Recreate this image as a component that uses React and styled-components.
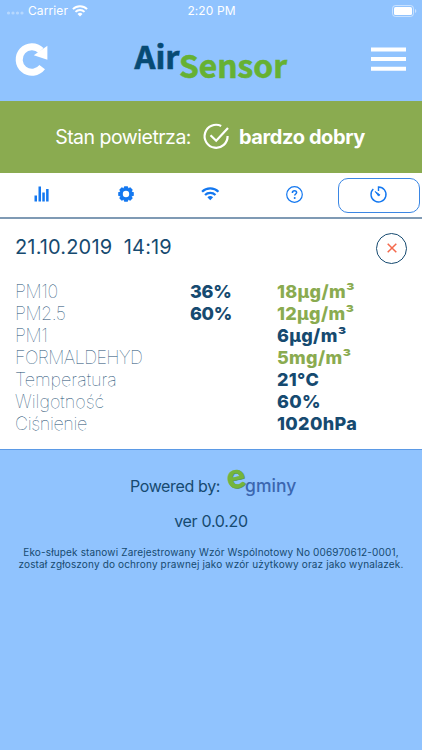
import React from "react"
import styled, { createGlobalStyle } from "styled-components"

const GlobalStyle = createGlobalStyle`
  :root {
    --sky: #90c3fe;
    --navy: #164a70;
    --olive: #8aab50;
    --blue: #1478f0;
  }

  * {
    box-sizing: border-box;
  }

  body {
    margin: 0;
    background: var(--sky);
    font-family: Inter, "Liberation Sans", sans-serif;
    color: var(--navy);
  }

  svg {
    display: block;
    flex: none;
    overflow: visible;
  }
`

const Screen = styled.div`
  display: flex;
  flex-direction: column;
  width: 422px;
  height: 750px;
  overflow: hidden;
  background: var(--sky);
`

const StatusBar = styled.div`
  display: grid;
  grid-template-columns: 1fr auto 1fr;
  align-items: center;
  height: 21px;
  padding: 0 5px 0 6px;
  color: #fff;
  font-size: 12px;
  letter-spacing: 0.1px;
`

const Carrier = styled.div`
  display: flex;
  align-items: center;
  gap: 4px;
`

const Battery = styled.div`
  justify-self: end;
`

const Header = styled.header`
  display: flex;
  align-items: center;
  justify-content: space-between;
  height: 80px;
  padding: 0 16px 4px 15px;
`

const IconButton = styled.button`
  display: flex;
  padding: 0;
  border: 0;
  background: none;
`

const Banner = styled.div`
  display: flex;
  align-items: center;
  justify-content: center;
  height: 72px;
  padding-right: 2px;
  background: var(--olive);
  color: #fff;
  font-size: 20px;

  svg {
    margin: 0 9px 0 12px;
  }
`

const BannerLabel = styled.span`
  font-size: 19.5px;
  letter-spacing: -0.5px;
`

const BannerValue = styled.strong`
  font-weight: 700;
  letter-spacing: -0.4px;
`

const Tabs = styled.nav`
  display: grid;
  grid-template-columns: repeat(5, 1fr);
  height: 46px;
  padding-top: 5px;
  background: #fff;
  border-bottom: 2px solid #7f9ab4;
`

const Tab = styled.button`
  display: flex;
  align-items: center;
  justify-content: center;
  height: 35px;
  margin: 0 2px 0 0;
  padding: 0 0 3px;
  border: 1px solid ${(p) => (p.$active ? "#3a86e4" : "transparent")};
  border-radius: 10px;
  background: none;
`

const Panel = styled.section`
  height: 231px;
  padding: 14px 15px 0 16px;
  background: #fff;
  border-bottom: 1px solid #5b9ae6;
`

const PanelTop = styled.div`
  display: flex;
  justify-content: space-between;
  height: 48px;
`

const DateText = styled.div`
  margin-left: -1px;
  font-size: 20px;
  line-height: 28px;
  letter-spacing: 0.15px;
  white-space: pre;
`

const CloseButton = styled.button`
  display: flex;
  align-items: center;
  justify-content: center;
  width: 31px;
  height: 31px;
  padding: 0 0 2px;
  border: 1px solid var(--navy);
  border-radius: 50%;
  background: none;
`

const Reading = styled.div`
  display: grid;
  grid-template-columns: 174px 87px 1fr;
  height: 22px;
  line-height: 22px;
  font-size: 18px;
`

const Name = styled.span`
  margin-left: -1px;
  font-weight: 100;
  letter-spacing: ${(p) => p.$spacing || 0}px;
`

const Value = styled.span`
  font-weight: 800;
  letter-spacing: ${(p) => p.$spacing || 0}px;
  color: ${(p) => (p.$good ? "var(--olive)" : "var(--navy)")};
`

const Footer = styled.footer`
  display: flex;
  flex-direction: column;
  align-items: center;
  padding-top: 19px;
`

const Powered = styled.div`
  display: flex;
  align-items: center;
  gap: 7px;
  height: 34px;
  padding-left: 5px;
  font-size: 16px;
  letter-spacing: -0.35px;
`

const Version = styled.div`
  margin-top: 8px;
  font-size: 16px;
  line-height: 20px;
  letter-spacing: -0.3px;
`

const Legal = styled.p`
  margin: 15px 0 0;
  font-size: 10px;
  line-height: 12px;
  letter-spacing: 0.15px;
  text-align: center;
  white-space: nowrap;
`

const readings = [
  { name: "PM10", spacing: -0.4, percent: "36%", value: "18µg/m³", good: true },
  { name: "PM2.5", spacing: -0.5, percent: "60%", value: "12µg/m³", good: true },
  { name: "PM1", spacing: -0.4, value: "6µg/m³" },
  { name: "FORMALDEHYD", spacing: -0.6, value: "5mg/m³", good: true },
  { name: "Temperatura", spacing: 0, value: "21°C" },
  { name: "Wilgotność", spacing: 0, value: "60%" },
  { name: "Ciśnienie", spacing: -0.35, value: "1020hPa" },
]

function WifiIcon({ width, color }) {
  return (
    <svg width={width} height={width * 0.72} viewBox="0 0 18 13" fill="none" stroke={color} strokeWidth="2.2">
      <path d="M1 4.7a11.4 11.4 0 0 1 16 0" />
      <path d="M3.9 7.8a7.3 7.3 0 0 1 10.2 0" />
      <path d="M9 13 6.2 10.1a4 4 0 0 1 5.6 0Z" fill={color} stroke="none" />
    </svg>
  )
}

function ReloadIcon() {
  return (
    <svg width="33" height="33" viewBox="0 0 33 33">
      <path d="M27.2 24.2A12.8 12.8 0 1 1 26 7.4" fill="none" stroke="#fff" strokeWidth="7" />
      <path d="M32.4 2.8v14L18.8 12.2Z" fill="#fff" />
    </svg>
  )
}

function AirSensorLogo() {
  return (
    <svg
      width="156"
      height="60"
      viewBox="0 0 156 60"
      fontFamily="'Noto Sans CJK SC', 'Noto Sans', sans-serif"
      fontWeight="700"
      fontSize="31.5"
      strokeWidth="0.6"
    >
      <text x="2.5" y="39.8" fill="#064a74" stroke="#064a74" textLength="45" lengthAdjust="spacingAndGlyphs">
        Air
      </text>
      <text x="47" y="48.8" fill="#66b132" stroke="#66b132" textLength="108" lengthAdjust="spacingAndGlyphs">
        Sensor
      </text>
    </svg>
  )
}

function MenuIcon() {
  return (
    <svg width="35" height="24" viewBox="0 0 35 24" fill="#fff">
      <path d="M0 .5h35v4H0zM0 10h35v4H0zM0 19.7h35v4H0z" />
    </svg>
  )
}

function CheckIcon() {
  return (
    <svg width="27" height="28" viewBox="0 0 27 28" fill="none" stroke="#fff" strokeWidth="2.2">
      <path d="M18.2 3A11.5 11.5 0 1 0 24.6 13" />
      <path d="m7.5 12.3 5.7 5.5L25 5" />
    </svg>
  )
}

function BarsIcon() {
  return (
    <svg width="15" height="16" viewBox="0 0 15 16" fill="#1478f0">
      <path d="M.5 9.5H3v6H.5zM4.5 .5H7v15H4.5zM8.3 6.5h2.5v9H8.3zM12.1 3h2.5v12.5h-2.5z" />
    </svg>
  )
}

function GearIcon() {
  const teeth = [0, 45, 90, 135, 180, 225, 270, 315]
  return (
    <svg width="16" height="16" viewBox="-8 -8 16 16" fill="#1478f0">
      {teeth.map((a) => (
        <path key={a} d="M-2.6-5.4-1.7-7.8h3.4l.9 2.4Z" transform={`rotate(${a})`} />
      ))}
      <circle r="4.7" fill="none" stroke="#1478f0" strokeWidth="3" />
    </svg>
  )
}

function HelpIcon() {
  return (
    <svg width="17" height="17" viewBox="0 0 17 17" fill="none" stroke="#1478f0">
      <circle cx="8.5" cy="8.5" r="7.8" strokeWidth="1.2" />
      <path d="M6.4 6.9c0-1.4.9-2.1 2.1-2.1s2.1.7 2.1 1.8c0 1.4-1.9 1.5-1.9 3" strokeWidth="1.5" />
      <circle cx="8.7" cy="11.9" r="1" fill="#1478f0" stroke="none" />
    </svg>
  )
}

function TimerIcon() {
  return (
    <svg width="17" height="17" viewBox="0 0 17 17" fill="none" stroke="#1478f0" strokeWidth="1.4">
      <path d="M3.3 3.1A7.5 7.5 0 1 0 8.5 1v3.9" />
      <path d="m5.2 5.5 4.6 3.3-1.2 1.3Z" fill="#1478f0" strokeLinejoin="round" strokeWidth="1" />
    </svg>
  )
}

function BatteryIcon() {
  return (
    <svg width="25" height="12" viewBox="0 0 25 12">
      <rect x="0.5" y="0.5" width="21" height="11" rx="3" fill="none" stroke="#fff" strokeOpacity="0.5" />
      <rect x="2" y="2" width="18" height="8" rx="1.5" fill="#fff" />
      <path d="M23 4v4c1.8-.6 1.8-3.4 0-4Z" fill="#fff" fillOpacity="0.5" />
    </svg>
  )
}

function EgminyLogo() {
  return (
    <svg width="70" height="60" viewBox="0 0 70 60">
      <g transform="rotate(-12 9 28)" fontFamily="Lato, sans-serif" fontWeight="700" fontSize="34">
        <text x="1.6" y="32.6" fill="#4f8f45" stroke="#4f8f45" strokeWidth="0.5">e</text>
        <text x="1" y="32" fill="#74b53c" stroke="#74b53c" strokeWidth="0.5">e</text>
      </g>
      <text x="18" y="36" fontFamily="Inter, sans-serif" fontWeight="500" fontSize="17.5" fill="#3b66b0" textLength="51">
        gminy
      </text>
    </svg>
  )
}

function App() {
  return (
    <Screen>
      <GlobalStyle />
      <StatusBar>
        <Carrier>
          <svg width="18" height="4" viewBox="0 0 18 4" fill="#fff" fillOpacity="0.35">
            <circle cx="2.5" cy="4" r="1.6" />
            <circle cx="7" cy="4" r="1.6" />
            <circle cx="11.5" cy="4" r="1.6" />
            <circle cx="16" cy="4" r="1.6" />
          </svg>
          Carrier
          <WifiIcon width={16} color="#fff" />
        </Carrier>
        <span>2:20 PM</span>
        <Battery>
          <BatteryIcon />
        </Battery>
      </StatusBar>
      <Header>
        <IconButton aria-label="Reload">
          <ReloadIcon />
        </IconButton>
        <AirSensorLogo />
        <IconButton aria-label="Menu">
          <MenuIcon />
        </IconButton>
      </Header>
      <Banner>
        <BannerLabel>Stan powietrza:</BannerLabel>
        <CheckIcon />
        <BannerValue>bardzo dobry</BannerValue>
      </Banner>
      <Tabs>
        <Tab><BarsIcon /></Tab>
        <Tab><GearIcon /></Tab>
        <Tab><WifiIcon width={18.5} color="#1478f0" /></Tab>
        <Tab><HelpIcon /></Tab>
        <Tab $active><TimerIcon /></Tab>
      </Tabs>
      <Panel>
        <PanelTop>
          <DateText>21.10.2019  14:19</DateText>
          <CloseButton aria-label="Close">
            <svg width="10" height="10" viewBox="0 0 10 10" stroke="#f4694c" strokeWidth="1.5">
              <path d="m.7.7 8.6 8.6M9.3.7.7 9.3" />
            </svg>
          </CloseButton>
        </PanelTop>
        {readings.map((r) => (
          <Reading key={r.name}>
            <Name $spacing={r.spacing}>{r.name}</Name>
            <Value $spacing={-0.3}>{r.percent}</Value>
            <Value $spacing={0.35} $good={r.good}>{r.value}</Value>
          </Reading>
        ))}
      </Panel>
      <Footer>
        <Powered>
          Powered by:
          <EgminyLogo />
        </Powered>
        <Version>ver 0.0.20</Version>
        <Legal>
          Eko-słupek stanowi Zarejestrowany Wzór Wspólnotowy No 006970612-0001,
          <br />
          został zgłoszony do ochrony prawnej jako wzór użytkowy oraz jako wynalazek.
        </Legal>
      </Footer>
    </Screen>
  )
}

export default App
